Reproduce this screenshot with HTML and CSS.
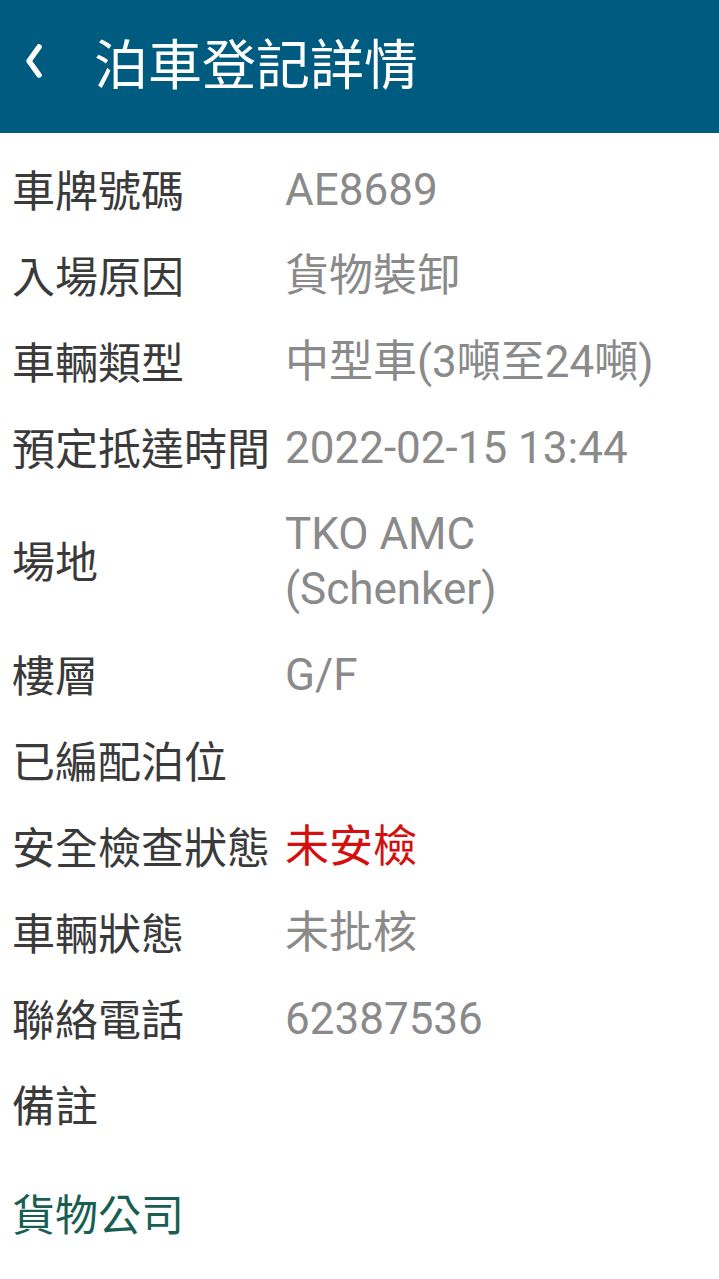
FILE: index.html
```html
<!DOCTYPE html>
<html lang="zh-Hant">
<head>
    <meta charset="UTF-8">
    <meta name="viewport" content="width=device-width, initial-scale=1.0">
    <title>泊車登記詳情</title>
    <link rel="stylesheet" href="styles.css">
</head>
<body>

<header class="top-bar">
    <a class="back-btn" href="#">
        <svg width="24" height="40" viewBox="0 0 24 40">
            <polyline points="17,5 7,19 17,33" fill="none" stroke="#ffffff" stroke-width="5.5" stroke-linecap="round" stroke-linejoin="round"/>
        </svg>
    </a>
    <h1>泊車登記詳情</h1>
</header>

<main class="detail">
    <div class="detail-list">
        <div class="label">車牌號碼</div>
        <div class="value">AE8689</div>

        <div class="label">入場原因</div>
        <div class="value">貨物裝卸</div>

        <div class="label">車輛類型</div>
        <div class="value">中型車(3噸至24噸)</div>

        <div class="label">預定抵達時間</div>
        <div class="value">2022-02-15 13:44</div>

        <div class="label">場地</div>
        <div class="value">TKO AMC<br>(Schenker)</div>

        <div class="label">樓層</div>
        <div class="value">G/F</div>

        <div class="label">已編配泊位</div>
        <div class="value"></div>

        <div class="label">安全檢查狀態</div>
        <div class="value warn">未安檢</div>

        <div class="label">車輛狀態</div>
        <div class="value">未批核</div>

        <div class="label">聯絡電話</div>
        <div class="value">62387536</div>

        <div class="label">備註</div>
        <div class="value"></div>
    </div>

    <h2 class="section-title">貨物公司</h2>
</main>

</body>
</html>
```

FILE: styles.css
```css
/* Общие стили */
html, body {
    margin: 0;
    padding: 0;
    background-color: #ffffff;
    font-family: Roboto, "Noto Sans CJK TC", sans-serif;
}

.top-bar {
    display: flex;
    align-items: center;
    height: 133px;
    background-color: #005b80;
    color: #ffffff;
    padding: 0 0 9px 22px;
    box-sizing: border-box;
}

.back-btn {
    display: flex;
    align-items: center;
    width: 24px;
    height: 40px;
}

.top-bar h1 {
    margin: 0 0 0 48px;
    font-family: "Noto Sans CJK TC", sans-serif;
    font-size: 54px;
    font-weight: normal;
    line-height: 1;
}

/* Список полей */
.detail {
    padding: 12px 0 0 12px;
}

.detail-list {
    display: grid;
    grid-template-columns: auto 1fr;
    column-gap: 15px;
}

.label,
.value {
    line-height: 55px;
    min-height: 55px;
}

.label {
    display: flex;
    align-items: center;
    padding: 15.5px 0;
    font-family: "Noto Sans CJK TC", sans-serif;
    font-size: 43px;
    color: #3a3a3a;
}

.value {
    padding: 18px 0 13px;
    font-family: Roboto, "Noto Sans CJK TC", sans-serif;
    font-size: 44px;
    color: #8a8a8a;
}

.value.warn {
    color: #d40f0f;
}

.section-title {
    margin: 39px 0 0;
    font-family: "Noto Sans CJK TC", sans-serif;
    font-size: 43px;
    font-weight: normal;
    line-height: 55px;
    color: #185e52;
}
```
